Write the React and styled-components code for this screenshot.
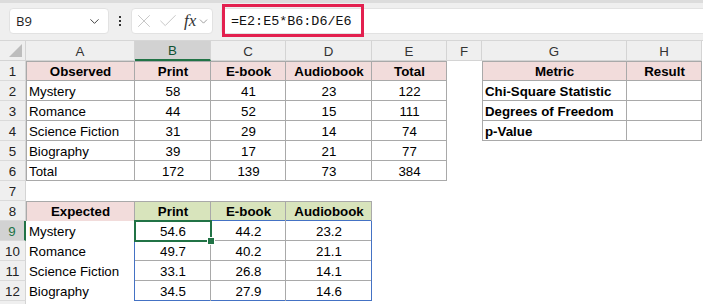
import React from "react";
import styled, { createGlobalStyle } from "styled-components";
import { ChevronDown, X, Check } from "lucide-react";

const GREEN = "#217346";
const GRID = "#a9a9a9";
const BLUE = "#4472c4";
const PINK = "#f2dcdb";
const LIME = "#d8e4bc";

const GlobalStyle = createGlobalStyle`
  html, body {
    margin: 0;
    padding: 0;
    background: #ffffff;
    overflow: hidden;
  }
  body {
    font-family: "Liberation Sans", Arial, sans-serif;
    color: #000;
  }
`;

const COLUMNS = ["A", "B", "C", "D", "E", "F", "G", "H"];

// helpers to describe a cell
const c = (v, o = {}) => ({ v, ...o });
const all = (col) => ({ t: col, r: col, b: col, l: col });
const head = (v, bg = PINK, extra = {}) => c(v, { bg, bold: true, align: "center", ...all(GRID), ...extra });
const blank = () => c("");

const observedRow = (name, nums, metric) => [
  c(name, { align: "left", r: GRID, b: GRID, l: GRID }),
  ...nums.map((n) => c(n, { align: "center", r: GRID, b: GRID })),
  blank(),
  metric !== undefined
    ? c(metric, { bold: true, align: "left", r: GRID, b: GRID, l: GRID })
    : blank(),
  metric !== undefined ? c("", { r: GRID, b: GRID }) : blank(),
];

const expectedRow = (name, nums, last) => [
  c(name, { align: "left", r: BLUE }),
  ...nums.map((n, i) =>
    c(n, {
      align: "center",
      r: i === 2 ? BLUE : GRID,
      b: last ? BLUE : GRID,
    })
  ),
  blank(),
  blank(),
  blank(),
  blank(),
];

const ROWS = [
  [
    head("Observed"),
    head("Print", PINK, { l: undefined }),
    head("E-book", PINK, { l: undefined }),
    head("Audiobook", PINK, { l: undefined }),
    head("Total", PINK, { l: undefined }),
    blank(),
    head("Metric"),
    head("Result", PINK, { l: undefined }),
  ],
  observedRow("Mystery", ["58", "41", "23", "122"], "Chi-Square Statistic"),
  observedRow("Romance", ["44", "52", "15", "111"], "Degrees of Freedom"),
  observedRow("Science Fiction", ["31", "29", "14", "74"], "p-Value"),
  observedRow("Biography", ["39", "17", "21", "77"]),
  observedRow("Total", ["172", "139", "73", "384"]),
  Array.from({ length: 8 }, blank),
  [
    head("Expected", PINK, { b: undefined }),
    head("Print", LIME, { l: undefined, b: BLUE }),
    head("E-book", LIME, { l: undefined, b: BLUE }),
    head("Audiobook", LIME, { l: undefined, b: BLUE }),
    blank(),
    blank(),
    blank(),
    blank(),
  ],
  expectedRow("Mystery", ["54.6", "44.2", "23.2"]),
  expectedRow("Romance", ["49.7", "40.2", "21.1"]),
  expectedRow("Science Fiction", ["33.1", "26.8", "14.1"]),
  expectedRow("Biography", ["34.5", "27.9", "14.6"], true),
  Array.from({ length: 8 }, blank),
];

const SELECTED_ROW = 9;
const SELECTED_COL = "B";
const VISIBLE_NUMBERS = 12; // row 13 only peeks in at the bottom edge

const shadowFor = ({ $t, $r, $b, $l }) => {
  const parts = [];
  if ($t) parts.push(`inset 0 1px 0 ${$t}`);
  if ($r) parts.push(`inset -1px 0 0 ${$r}`);
  if ($b) parts.push(`inset 0 -1px 0 ${$b}`);
  if ($l) parts.push(`inset 1px 0 0 ${$l}`);
  return parts.length ? parts.join(", ") : "none";
};

export default function App() {
  return (
    <>
      <GlobalStyle />
      <Window>
        <Toolbar>
          <NameBox>
            <NameText>B9</NameText>
            <ChevronDown size={15} strokeWidth={1.6} color="#444" />
          </NameBox>
          <Dots>
            <Dot />
            <Dot />
            <Dot />
          </Dots>
          <FxBox>
            <IconSlot $w={22}>
              <X size={24} strokeWidth={1} color="#c3c3c3" />
            </IconSlot>
            <IconSlot $w={22} $ml={2}>
              <Check size={24} strokeWidth={1} color="#c3c3c3" />
            </IconSlot>
            <Fx>fx</Fx>
            <ChevronDown size={13} strokeWidth={1.5} color="#8a8a8a" />
          </FxBox>
          <FormulaBar>
            <FormulaText>=E2:E5*B6:D6/E6</FormulaText>
            <Highlight />
          </FormulaBar>
        </Toolbar>

        <Sheet>
          <Corner>
            <Triangle />
          </Corner>
          {COLUMNS.map((col) => (
            <ColHeader key={col} $selected={col === SELECTED_COL}>
              {col}
            </ColHeader>
          ))}

          {ROWS.map((row, ri) => {
            const n = ri + 1;
            return (
              <React.Fragment key={n}>
                <RowHeader $selected={n === SELECTED_ROW}>
                  {n <= VISIBLE_NUMBERS ? n : ""}
                </RowHeader>
                {row.map((cell, ci) => (
                  <Cell
                    key={ci}
                    $bg={cell.bg}
                    $bold={cell.bold}
                    $align={cell.align}
                    $t={cell.t}
                    $r={cell.r}
                    $b={cell.b}
                    $l={cell.l}
                  >
                    {cell.v}
                    {n === SELECTED_ROW && COLUMNS[ci] === SELECTED_COL && (
                      <Selection>
                        <Handle />
                      </Selection>
                    )}
                  </Cell>
                ))}
              </React.Fragment>
            );
          })}
        </Sheet>
      </Window>
    </>
  );
}

const Window = styled.div`
  width: 703px;
  height: 304px;
  overflow: hidden;
  display: flex;
  flex-direction: column;
`;

const Toolbar = styled.div`
  position: relative;
  flex-shrink: 0;
  height: 41px;
  box-sizing: border-box;
  display: flex;
  align-items: flex-start;
  padding: 5px 0 0 9px;
  background: #efefef;
  border-top: 3px solid #dcdcdc;
  border-bottom: 1px solid #d6d6d6;
`;

const NameBox = styled.div`
  width: 100px;
  height: 26px;
  box-sizing: border-box;
  display: flex;
  align-items: center;
  justify-content: space-between;
  padding: 0 6px 0 6px;
  background: #ffffff;
  border: 1px solid #e2e2e2;
  border-radius: 4px;
`;

const NameText = styled.span`
  font-family: "Open Sans", "Noto Sans", sans-serif;
  font-size: 13px;
  color: #222;
`;

const Dots = styled.div`
  width: 22px;
  height: 26px;
  display: flex;
  flex-direction: column;
  align-items: center;
  justify-content: center;
  gap: 2px;
`;

const Dot = styled.span`
  width: 2px;
  height: 2px;
  background: #333;
`;

const FxBox = styled.div`
  width: 82px;
  height: 26px;
  box-sizing: border-box;
  display: flex;
  align-items: center;
  padding: 0 0 0 1px;
  background: #ffffff;
  border: 1px solid #e2e2e2;
  border-radius: 4px;
`;

const IconSlot = styled.span`
  display: flex;
  justify-content: center;
  width: ${(p) => p.$w}px;
  margin-left: ${(p) => p.$ml || 0}px;
`;

const Fx = styled.span`
  font-family: "Liberation Serif", "Times New Roman", serif;
  font-style: italic;
  font-size: 17px;
  color: #333;
  margin-left: 5px;
  margin-right: 1px;
`;

const FormulaBar = styled.div`
  position: relative;
  flex: 1;
  height: 26px;
  box-sizing: border-box;
  margin-left: 8px;
  display: flex;
  align-items: center;
  padding-left: 9px;
  background: #ffffff;
  border: 1px solid #e2e2e2;
  border-right: none;
  border-radius: 4px 0 0 4px;
`;

const FormulaText = styled.span`
  font-family: "Liberation Mono", "Courier New", monospace;
  font-size: 13.4px;
  color: #111;
`;

const Highlight = styled.div`
  position: absolute;
  left: 0;
  top: -5px;
  width: 142px;
  height: 33px;
  box-sizing: border-box;
  border: 3px solid #e3204f;
`;

const Sheet = styled.div`
  flex-shrink: 0;
  display: grid;
  grid-template-columns: 26px 109px 76px 75px 86px 75px 35px 145px 75px;
  grid-auto-rows: 20px;
  font-size: 13.3px;
`;

const Corner = styled.div`
  display: flex;
  align-items: flex-end;
  justify-content: flex-end;
  padding: 0 3px 3px 0;
  background: #efefef;
  border-right: 1px solid #d4d4d4;
  border-bottom: 1px solid #d4d4d4;
`;

const Triangle = styled.span`
  width: 0;
  height: 0;
  border-left: 13px solid transparent;
  border-bottom: 13px solid #bdbdbd;
`;

const ColHeader = styled.div`
  display: flex;
  align-items: center;
  justify-content: center;
  box-sizing: border-box;
  background: ${(p) => (p.$selected ? "#d2d2d2" : "#efefef")};
  color: ${(p) => (p.$selected ? "#0f5132" : "#333")};
  border-right: 1px solid #d4d4d4;
  border-bottom: ${(p) => (p.$selected ? `2px solid ${GREEN}` : "1px solid #d4d4d4")};
  padding-top: 1px;
`;

const RowHeader = styled.div`
  display: flex;
  align-items: center;
  justify-content: center;
  box-sizing: border-box;
  background: ${(p) => (p.$selected ? "#d2d2d2" : "#efefef")};
  color: ${(p) => (p.$selected ? GREEN : "#222")};
  border-bottom: 1px solid #dadada;
  border-right: ${(p) => (p.$selected ? `2px solid ${GREEN}` : "1px solid #d4d4d4")};
  padding-top: 1px;
`;

const Cell = styled.div`
  position: relative;
  display: flex;
  align-items: center;
  justify-content: ${(p) => (p.$align === "left" ? "flex-start" : "center")};
  box-sizing: border-box;
  padding: 1px 3px 0 3px;
  white-space: nowrap;
  background: ${(p) => p.$bg || "#ffffff"};
  font-weight: ${(p) => (p.$bold ? 700 : 400)};
  box-shadow: ${shadowFor};
`;

const Selection = styled.div`
  position: absolute;
  z-index: 2;
  left: -1px;
  top: -1px;
  right: -1px;
  bottom: -1px;
  border: 2px solid ${GREEN};
  pointer-events: none;
`;

const Handle = styled.span`
  position: absolute;
  right: -5px;
  bottom: -5px;
  width: 6px;
  height: 6px;
  background: ${GREEN};
  border: 1px solid #ffffff;
`;
